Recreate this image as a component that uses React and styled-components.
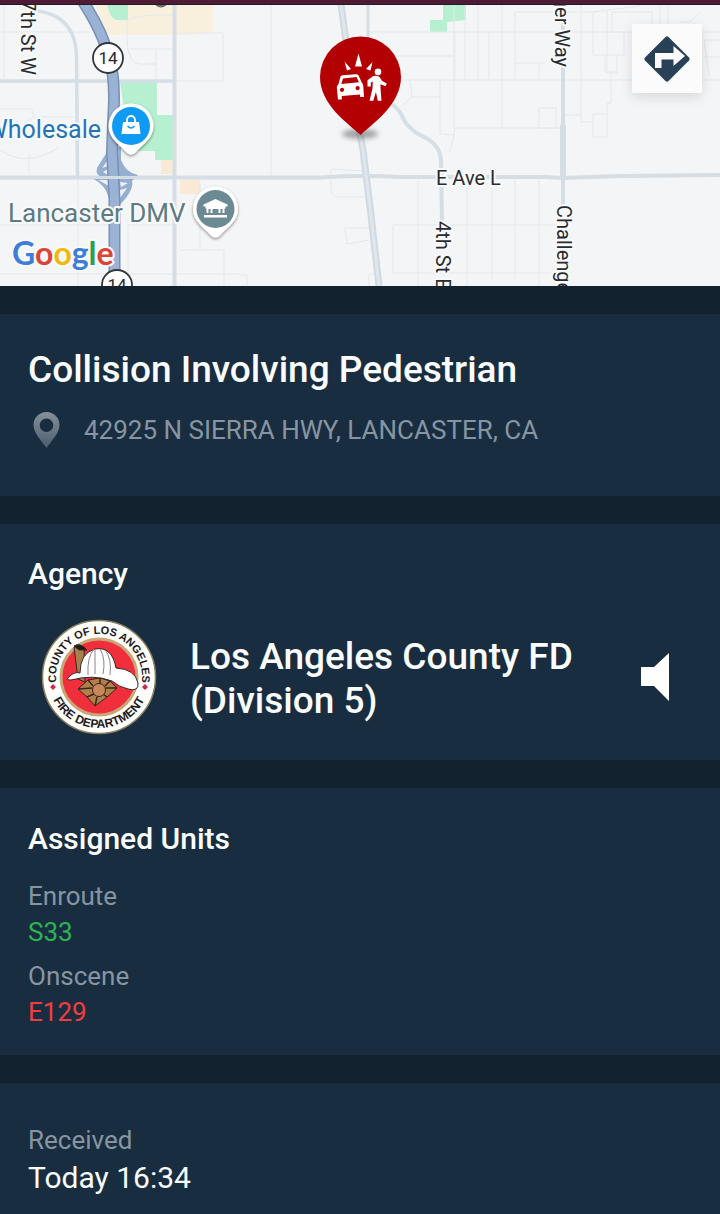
import React from "react";
import styled, { createGlobalStyle } from "styled-components";

const COLORS = {
  page: "#12222e",
  card: "#182e40",
  text: "#fbfcfd",
  muted: "#8795a2",
  enroute: "#2bb552",
  onscene: "#f23d3f"
};

const UNITS = [
  { status: "Enroute", unit: "S33", color: COLORS.enroute },
  { status: "Onscene", unit: "E129", color: COLORS.onscene }
];

const THIN_ROADS = [
  "M0 32H90M4 5V78M175 33H223V81M174 81H223M127 20V40Q128 64 140 64H156M127 20Q140 14 174 15M127 49H172M156 49V81",
  "M0 109H33V117L0 140M33 117H74M0 150Q26 168 58 148M29 154V174M0 225H109M128 225H174M128 225V274M78 180V286M0 274H240M200 182V250M180 250H224V286",
  "M271 5V176M331 176V169L362 171M331 180V190Q332 197 340 197H366M345 228H373M345 228L347 244L369 240M369 286V274H378M240 275H247V286",
  "M370 32H720M395 56H454M400 80H720M455 32V80M465 5V80M478 5V80M410 80L412 97L402 106M412 97H440M440 80V134L454 135L455 128H560M454 135L450 152M454 128V5",
  "M418 181V286M393 225H560M393 225V273H560M467 181V286M492 176V280M515 176V280M539 176V286",
  "M502 5V128M515 79V12H598M489 32V79M515 63H545M539 63V79M581 5V122H593V114H607V137H593V122M564 115H581M539 108H556V128H539V108M593 12V55H624V32H612V12H652V25M607 10V73H617V55M605 55V72H617M611 73V103H607V114M593 12L640 6M660 5V24M668 5V24M680 22H690L700 12M704 40H720M704 40L709 76M704 57H720"
];

const GlobalStyle = createGlobalStyle`
  * {
    box-sizing: border-box;
  }

  body {
    margin: 0;
    background: ${COLORS.page};
    font-family: Roboto, "Liberation Sans", sans-serif;
  }
`;

const StyledPage = styled.main`
  min-height: 100vh;
  display: flex;
  flex-direction: column;
  gap: 28px;
  background: ${COLORS.page};
  color: ${COLORS.text};
`;

const StyledMap = styled.section`
  position: relative;
  border-top: 4px solid #4f1a33;
  background: #f4f5f6;
`;

const StyledMapDrawing = styled.svg`
  display: block;
  width: 100%;
  height: 282px;
`;

const StyledMapLabel = styled.text`
  font-family: Roboto, sans-serif;
  font-size: ${props => props.$size || 20}px;
  fill: ${props => props.$color || "#292b2e"};
  stroke: #f8f9fa;
  stroke-width: 4px;
  stroke-linejoin: round;
  paint-order: stroke;
`;

const StyledMapLogo = styled(StyledMapLabel)`
  font-family: Lato, Roboto, sans-serif;
  font-weight: 700;
`;

const StyledDirections = styled.button`
  position: absolute;
  top: 20px;
  right: 18px;
  width: 70px;
  height: 69px;
  display: flex;
  align-items: center;
  justify-content: center;
  padding: 0;
  border: 0;
  background: #fbfbfb;
  box-shadow: 0 4px 12px rgba(0, 0, 0, 0.12);
  cursor: pointer;
`;

const StyledCard = styled.section`
  display: flex;
  flex-direction: column;
  flex-grow: ${props => (props.$fill ? 1 : 0)};
  padding: ${props => props.$padding || "32px 28px"};
  background: ${COLORS.card};
`;

const StyledTitle = styled.h1`
  margin: 0;
  font-size: 37px;
  font-weight: 500;
  line-height: 44px;
`;

const StyledHeading = styled.h2`
  margin: 0;
  font-size: 30px;
  font-weight: 500;
  line-height: 36px;
`;

const StyledAddress = styled.address`
  display: flex;
  align-items: center;
  gap: 24px;
  margin-top: 20px;
  padding-left: 4px;
  color: ${COLORS.muted};
  font-size: 26px;
  font-style: normal;
  line-height: 36px;
`;

const StyledAgency = styled.div`
  display: flex;
  align-items: center;
  margin-top: 26px;
  padding: 0 20px 0 12px;
`;

const StyledAgencyName = styled.p`
  flex: 1;
  max-width: 420px;
  margin: 0 auto 0 32px;
  padding-top: 4px;
  font-size: 37px;
  font-weight: 500;
  line-height: 44px;
`;

const StyledSound = styled.button`
  display: flex;
  padding: 0;
  border: 0;
  background: none;
  color: #fff;
  cursor: pointer;
`;

const StyledFacts = styled.dl`
  display: flex;
  flex-direction: column;
  gap: 8px;
  margin: ${props => (props.$spaced ? "21px 0 0" : "0")};
`;

const StyledLabel = styled.dt`
  color: ${COLORS.muted};
  font-size: 26px;
  line-height: 36px;
`;

const StyledValue = styled.dd`
  margin: 0;
  color: ${props => props.$color || COLORS.text};
  font-size: ${props => (props.$large ? 30 : 26)}px;
  line-height: ${props => (props.$large ? 40 : 36)}px;
`;

const Shield = ({ x, y }) => (
  <g transform={`translate(${x} ${y})`}>
    <circle r="15" fill="#fff" stroke="#34373a" strokeWidth="1.8" />
    <StyledMapLabel $size={17} textAnchor="middle" y="6">
      14
    </StyledMapLabel>
  </g>
);

const PlacePin = ({ x, y, color, children }) => (
  <g transform={`translate(${x} ${y})`}>
    <path
      d="M-22.5 0A22.5 22.5 0 1 1 22.5 0C22.5 12 12 18 5 26Q0 31 -5 26C-12 18 -22.5 12 -22.5 0Z"
      fill="#fff"
      filter="url(#pinShadow)"
    />
    <circle r="19" fill={color} />
    {children}
  </g>
);

const IncidentMarker = () => (
  <g>
    <ellipse cx="360" cy="134" rx="18" ry="5" fill="#555" opacity=".5" filter="url(#soft)" />
    <path
      d="M360.5 135C349 124 320 105 320 77A40.5 40.5 0 0 1 401 77C401 105 372 124 360.5 135Z"
      fill="#b30003"
    />
    <g fill="#fff">
      <path d="M358.5 53.5L355 66.5H362ZM344.5 61.500L347 70.5L351 69ZM372.5 62L366 69L370.5 70.5Z" />
      <path
        fillRule="evenodd"
        d="M340.5 76.5Q341 75.5 342.5 75.3L356 74.2Q358 74.2 358.6 75.5L361.5 82Q363 83.5 363.2 85.500L364 97H360V94.500L341.800 96V99.500H338L336.800 87.500Q336.800 85.500 338.500 84ZM343 78.500L341.300 84L359 82.200L356.500 77ZM342 87.800A2.100 2.100 0 1 0 342.100 92A2.100 2.100 0 1 0 342 87.800M357.600 86A2.100 2.100 0 1 0 357.700 90.200A2.100 2.100 0 1 0 357.600 86"
      />
      <circle cx="378" cy="71.900" r="3.300" />
      <path d="M372.500 76.500Q376.500 75 379.500 77L382.200 81L386.800 83.500L385.500 86.300L380.500 84.200V88L381.500 100.700H377.800L375.900 92L373.300 100.700H369.500L372.500 88.500L372.800 81.500L370.800 82.800V86.500H367.500V80.200Z" />
    </g>
  </g>
);

const MapDrawing = () => (
  <StyledMapDrawing
    viewBox="0 4 720 282"
    preserveAspectRatio="xMidYMid slice"
    role="img"
    aria-label="Incident map"
  >
    <defs>
      <filter id="pinShadow" x="-30%" y="-30%" width="160%" height="160%">
        <feDropShadow dx="0" dy="1.5" stdDeviation="1.5" floodOpacity=".45" />
      </filter>
      <filter id="soft" x="-30%" y="-80%" width="160%" height="260%">
        <feGaussianBlur stdDeviation="2.5" />
      </filter>
    </defs>

    <path d="M96 4H213V32L190 35H106Z" fill="#f8efdd" />
    <path d="M161 159H173V174H161ZM180 180H200V194H180Z" fill="#f8ead4" />
    <path
      d="M107 4H128V20H117Q110 19 107 4M120 82H157V115H173V160H155V151H130ZM443 4H466V20L447 22V32H430V20H443Z"
      fill="#b6f0d0"
    />

    <g fill="none" stroke="#e4e8ec">
      {THIN_ROADS.map(road => (
        <path key={road} d={road} />
      ))}
    </g>
    <g fill="none" stroke="#d5dee4" strokeWidth="4">
      <path d="M38 11Q60 14 70 30Q76 40 76.500 56L77.500 176" strokeWidth="3.5" />
      <path d="M0 81H174" strokeWidth="3.5" />
      <path d="M174.500 4V286" />
      <path d="M0 177.500H320Q360 175 400 177H545L563 178L620 176L720 175" />
      <path d="M368 4V40" strokeWidth="3" />
      <path d="M392 104Q400 110 404 120Q410 130 422 136Q440 144 441 160L442 225" />
      <path d="M563 4V205" />
      <path d="M563 125V178" strokeWidth="6" />
    </g>
    <path d="M341 4L346 42M359 130L363 150L371 215L379 286" fill="none" stroke="#d0dae2" strokeWidth="7" />
    <path d="M341 4L346 42M359 130L363 150L371 215L379 286" fill="none" stroke="#dfe6ec" strokeWidth="3" />

    <path
      d="M110 147L97 168Q95 176 103 177H88Q104 182 108 196L112 206H119L126 198Q134 187 132 181L138 175Q126 173 121 160V147Z"
      fill="#94afd0"
    />
    <path
      d="M108 160L102 168L108 166ZM103 172L108 169V175ZM98 180H109V186ZM120 182L128 183L121 187ZM120 190L127 188L120 198Z"
      fill="#eef1f4"
    />
    <g fill="none">
      <path d="M82 0Q103 32 109 58Q114 72 114 100L112 150L114.500 200V286" stroke="#7890b4" strokeWidth="12" />
      <path d="M82 0Q103 32 109 58Q114 72 114 100L112 150L114.500 200V286" stroke="#9ab2d3" strokeWidth="9" />
      <path d="M88 177.500H138" stroke="#d3dce4" strokeWidth="3" />
    </g>

    <circle cx="161" cy="0" r="7.500" fill="#6f6a69" />
    <Shield x={108} y={58} />
    <Shield x={117} y={285} />

    <StyledMapLabel transform="translate(21 75) rotate(90)" textAnchor="end">
      7th St W
    </StyledMapLabel>
    <StyledMapLabel transform="translate(555 67) rotate(90)" textAnchor="end">
      Challenger Way
    </StyledMapLabel>
    <StyledMapLabel transform="translate(557 205) rotate(90)">Challenger Way</StyledMapLabel>
    <StyledMapLabel transform="translate(436 221) rotate(90)">4th St E</StyledMapLabel>
    <StyledMapLabel x="436" y="185">
      E Ave L
    </StyledMapLabel>
    <StyledMapLabel $size={25} $color="#2474b5" x="101" y="138" textAnchor="end">
      Wholesale
    </StyledMapLabel>
    <StyledMapLabel $size={26} $color="#5e7a82" x="8" y="222">
      Lancaster DMV
    </StyledMapLabel>
    <StyledMapLogo $size={32} x="12" y="265">
      <tspan fill="#3f7ed8">G</tspan>
      <tspan fill="#dc4437">o</tspan>
      <tspan fill="#f0b90b">o</tspan>
      <tspan fill="#3f7ed8">g</tspan>
      <tspan fill="#2c9f50">l</tspan>
      <tspan fill="#dc4437">e</tspan>
    </StyledMapLogo>

    <PlacePin x={131} y={126} color="#0f9af5">
      <path d="M-8 -4H8L9.500 8H-9.500Z" fill="#fff" />
      <path d="M-4 -3V-6A4 4 0 0 1 4 -6V-3" fill="none" stroke="#fff" strokeWidth="1.800" />
      <path d="M-3.500 0Q0 4 3.500 0" fill="none" stroke="#0f9af5" strokeWidth="1.500" />
    </PlacePin>
    <PlacePin x={215.5} y={209} color="#6c8a94">
      <path
        d="M0 -10L12 -4.500V-2.500H-12V-4.500ZM-10 -2.500H10V-.5H9V4H7V0H5V4H3V0H-3V4H-5V0H-7V4H-9V-.5H-10ZM-11.500 6H11.500V8.500H-11.500Z"
        fill="#fff"
      />
    </PlacePin>
    <IncidentMarker />
    <path d="M0 4.500H720" stroke="#1c1d27" />
  </StyledMapDrawing>
);

const DirectionsIcon = () => (
  <svg width="48" height="48" viewBox="0 0 48 48" aria-hidden="true">
    <path
      d="M22.500 2Q24 .5 25.500 2L46 22.500Q47.500 24 46 25.500L25.500 46Q24 47.500 22.500 46L2 25.500Q.5 24 2 22.500Z"
      fill="#294156"
    />
    <path d="M12 33V18H30.500V11L42 21L30.500 31V24.500H18.500V33Z" fill="#fbfbfb" />
  </svg>
);

const LocationIcon = () => (
  <svg width="28" height="36" viewBox="0 0 28 36" aria-hidden="true">
    <defs>
      <linearGradient id="locationFill" x1="0" y1="0" x2="0" y2="1">
        <stop offset="0" stopColor="#84909b" />
        <stop offset="1" stopColor="#4b5e6f" />
      </linearGradient>
    </defs>
    <path
      fillRule="evenodd"
      fill="url(#locationFill)"
      d="M14.500 0A13 13 0 0 1 27.500 13C27.500 21 20 28 14.500 36C9 28 1.500 21 1.500 13A13 13 0 0 1 14.500 0ZM14.500 6.500A6.800 6.800 0 1 0 14.500 20.100A6.800 6.800 0 1 0 14.500 6.500Z"
    />
  </svg>
);

const AgencySeal = () => (
  <svg width="118" height="118" viewBox="-59 -59 118 118" role="img" aria-label="Fire department seal">
    <defs>
      <path id="sealTop" d="M-42 9A43 43 0 1 1 42 9" />
      <path id="sealBottom" d="M-51 0A51 51 0 0 0 51 0" />
    </defs>
    <circle r="56.500" fill="#fffefb" stroke="#8a8060" strokeWidth="1.500" />
    <circle r="38" fill="#f02e3c" stroke="#c9a676" strokeWidth="3" />
    <g fontFamily="Liberation Sans, sans-serif" fontWeight="700" fill="#1c1a1d" textAnchor="middle">
      <text fontSize="11">
        <textPath href="#sealTop" startOffset="50%">
          COUNTY OF LOS ANGELES
        </textPath>
      </text>
      <text fontSize="12">
        <textPath href="#sealBottom" startOffset="50%">
          FIRE DEPARTMENT
        </textPath>
      </text>
    </g>
    <path d="M-46 7L-43 10L-46 13L-49 10ZM46 7L49 10L46 13L43 10Z" fill="#c92c4c" />
    <g stroke="#3a2420" strokeWidth="1" strokeLinejoin="round">
      <path d="M-25 -30Q-20 -34 -15 -28L-14 5L-21 2Z" fill="#a58150" />
      <path d="M-25 -31Q-19 -35 -12 -27L-20 -27Z" fill="#1f1a1a" />
      <path
        d="M-31 1Q-25 -6 -19 -4Q-19 -24 -4 -28Q13 -31 17 -9Q36 -8 39 6Q40 15 29 12Q20 10 13 4Q-6 -3 -28 3Q-33 3 -31 1Z"
        fill="#fff"
      />
      <path d="M-11 -2Q-12 -20 -5 -28M-4 -3V-28M4 -3Q7 -18 1 -28M11 -2Q13 -19 6 -27" fill="none" stroke="#8b8581" />
      <path d="M-21 12L-11 3L1 1L11 4L18 11L8 20L-4 29L-12 20Z" fill="#b08146" />
      <path d="M-21 12L-7 11M18 11L7 11M-4 29L-2 20M8 20L4 17M-11 3L-6 9M11 4L6 9M1 1V7M-12 20L-5 17" fill="none" strokeWidth="1.500" />
      <circle cx="0" cy="13" r="6.500" fill="#c9875b" />
    </g>
  </svg>
);

const SoundIcon = () => (
  <svg width="32" height="48" viewBox="0 0 32 48" aria-hidden="true">
    <path d="M1 14H14L29 0V48L14 33H1Z" fill="currentColor" />
  </svg>
);

const App = () => (
  <>
    <GlobalStyle />
    <StyledPage>
      <StyledMap>
        <MapDrawing />
        <StyledDirections type="button" aria-label="Directions">
          <DirectionsIcon />
        </StyledDirections>
      </StyledMap>

      <StyledCard $padding="34px 28px 48px">
        <StyledTitle>Collision Involving Pedestrian</StyledTitle>
        <StyledAddress>
          <LocationIcon />
          42925 N SIERRA HWY, LANCASTER, CA
        </StyledAddress>
      </StyledCard>

      <StyledCard $padding="32px 28px 24px">
        <StyledHeading>Agency</StyledHeading>
        <StyledAgency>
          <AgencySeal />
          <StyledAgencyName>Los Angeles County FD (Division 5)</StyledAgencyName>
          <StyledSound type="button" aria-label="Listen">
            <SoundIcon />
          </StyledSound>
        </StyledAgency>
      </StyledCard>

      <StyledCard $padding="33px 28px 25px">
        <StyledHeading>Assigned Units</StyledHeading>
        <StyledFacts $spaced>
          {UNITS.map(({ status, unit, color }) => (
            <div key={unit}>
              <StyledLabel>{status}</StyledLabel>
              <StyledValue $color={color}>{unit}</StyledValue>
            </div>
          ))}
        </StyledFacts>
      </StyledCard>

      <StyledCard $fill $padding="39px 28px 16px">
        <StyledFacts>
          <div>
            <StyledLabel>Received</StyledLabel>
            <StyledValue $large>Today 16:34</StyledValue>
          </div>
        </StyledFacts>
      </StyledCard>
    </StyledPage>
  </>
);

export default App;
